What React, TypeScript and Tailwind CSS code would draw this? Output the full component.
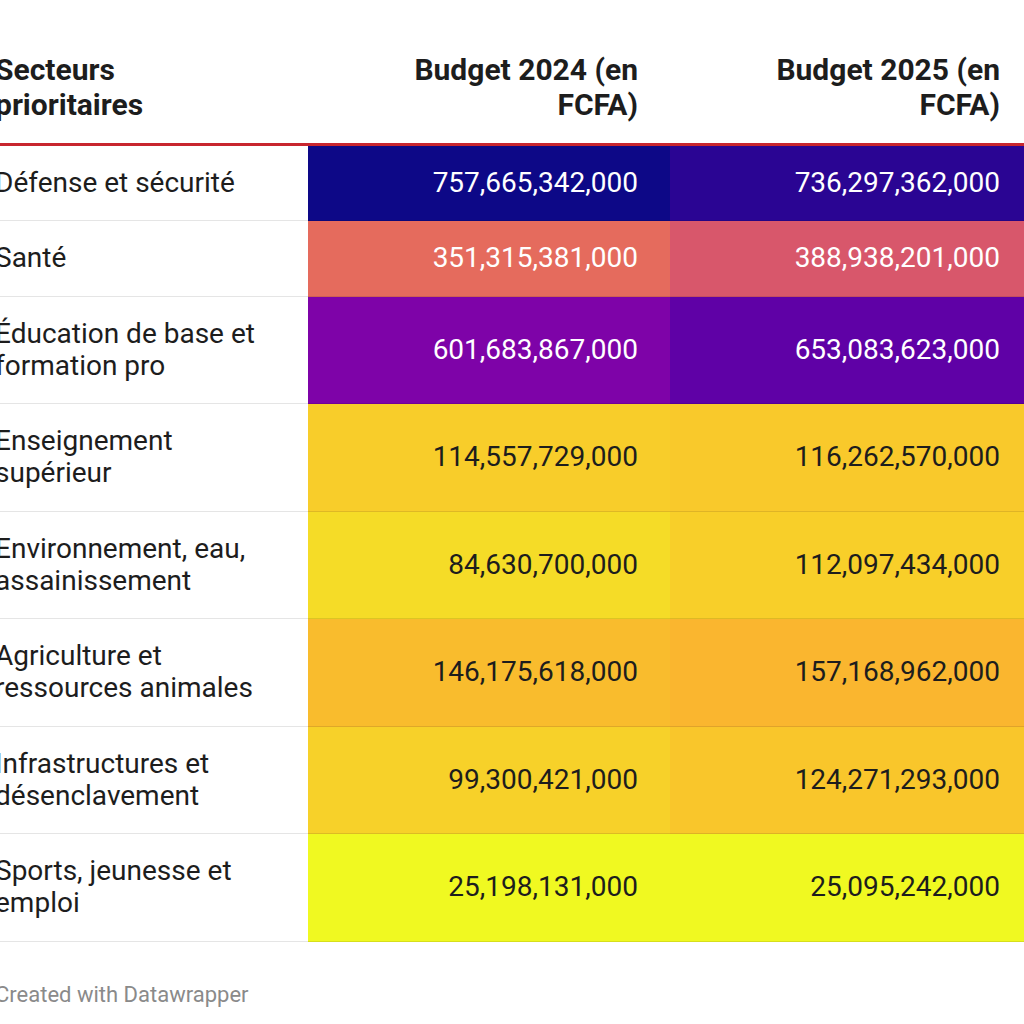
const rows = [
  { label: "Défense et sécurité", a: "757,665,342,000", b: "736,297,362,000", ca: "#0d0887", cb: "#2a0593", light: true },
  { label: "Santé", a: "351,315,381,000", b: "388,938,201,000", ca: "#e56b5d", cb: "#d8576b", light: true },
  { label: "Éducation de base et formation pro", a: "601,683,867,000", b: "653,083,623,000", ca: "#7e03a8", cb: "#5f01a6", light: true },
  { label: "Enseignement supérieur", a: "114,557,729,000", b: "116,262,570,000", ca: "#f8cd2a", cb: "#f9c92b", light: false },
  { label: "Environnement, eau, assainissement", a: "84,630,700,000", b: "112,097,434,000", ca: "#f5dc27", cb: "#f8cf29", light: false },
  { label: "Agriculture et ressources animales", a: "146,175,618,000", b: "157,168,962,000", ca: "#f9bc2d", cb: "#fab62f", light: false },
  { label: "Infrastructures et désenclavement", a: "99,300,421,000", b: "124,271,293,000", ca: "#f7d129", cb: "#f9c62b", light: false },
  { label: "Sports, jeunesse et emploi", a: "25,198,131,000", b: "25,095,242,000", ca: "#f0f921", cb: "#f0f921", light: false },
];

export default function App() {
  return (
    <div className="w-[1024px] h-[1024px] overflow-hidden bg-white" style={{ fontFamily: "Roboto, 'Liberation Sans', sans-serif" }}>
      <div className="ml-[-8px] w-[1040px] pt-[52px]">
        {/* Header */}
        <div className="grid grid-cols-[316px_362px_362px] border-b-[3px] border-[#c8262e] text-[#1d1d1d] font-bold text-[30px] leading-[35px]">
          <div className="pl-[3px] pb-[21px] w-[210px]">Secteurs prioritaires</div>
          <div className="pr-[32px] pb-[21px] text-right flex justify-end">
            <span className="w-[250px]">Budget 2024 (en FCFA)</span>
          </div>
          <div className="pr-[32px] pb-[21px] text-right flex justify-end">
            <span className="w-[250px]">Budget 2025 (en FCFA)</span>
          </div>
        </div>

        {/* Body */}
        {rows.map((r, i) => (
          <div key={i} className="grid grid-cols-[316px_362px_362px] text-[28px] leading-[32.25px]">
            <div className="pl-[3px] pr-[40px] py-[21px] border-b border-black/10 text-[#1d1d1d]">{r.label}</div>
            <div
              className={`pr-[32px] py-[21px] border-b border-black/10 flex items-center justify-end ${r.light ? "text-white" : "text-[#1d1d1d]"}`}
              style={{ backgroundColor: r.ca }}
            >
              {r.a}
            </div>
            <div
              className={`pr-[32px] py-[21px] border-b border-black/10 flex items-center justify-end ${r.light ? "text-white" : "text-[#1d1d1d]"}`}
              style={{ backgroundColor: r.cb }}
            >
              {r.b}
            </div>
          </div>
        ))}

        <div className="pl-[3px] pt-[40px] text-[22px] leading-[26px] text-[#8a8a8a]">Created with Datawrapper</div>
      </div>
    </div>
  );
}
